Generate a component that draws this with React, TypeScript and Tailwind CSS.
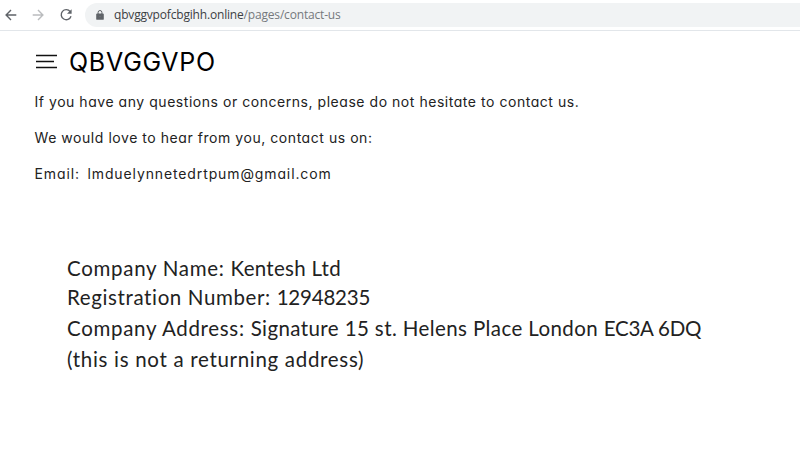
const BackIcon = ({ className }: { className: string }) => (
  <svg viewBox="0 0 12 12" className={className} fill="none" stroke="currentColor" strokeWidth="1.4">
    <path d="M11.3 6H1.2M6 1.1 1.1 6 6 10.9" />
  </svg>
);

const ReloadIcon = () => (
  <svg viewBox="0 0 14 14" className="size-3.5 text-[#5f6368]" fill="none">
    <path d="M11.2 3.6A5 5 0 1 0 12 8.2" stroke="currentColor" strokeWidth="1.4" />
    <path d="M12.6 1.2v4.6H8z" fill="currentColor" />
  </svg>
);

const LockIcon = () => (
  <svg viewBox="0 0 8 10" className="h-2.5 w-2 text-[#5f6368]">
    <rect x="0.2" y="3.5" width="7.6" height="6.3" rx="0.9" fill="currentColor" />
    <path d="M2.1 4V2.4a1.9 1.9 0 0 1 3.8 0V4" fill="none" stroke="currentColor" strokeWidth="1" />
    <circle cx="4" cy="6.6" r="0.7" fill="#777b80" />
  </svg>
);

const BrowserBar = () => (
  <div className="flex h-[31px] items-center border-b border-[#e2e6ea] pl-[5px]">
    <BackIcon className="size-3 text-[#5f6368]" />
    <BackIcon className="ml-[15px] size-3 rotate-180 text-[#babcbe]" />
    <div className="ml-[15px]">
      <ReloadIcon />
    </div>
    <div className="ml-3 flex h-6 flex-1 items-center rounded-l-full bg-[#f1f3f4] pl-[11px]">
      <LockIcon />
      <p className="ml-2.5 whitespace-nowrap font-['Open_Sans',sans-serif] text-xs tracking-[-0.18px] text-[#75797d]">
        <span className="text-[#3c4043]">qbvggvpofcbgihh.online</span>/pages/contact-us
      </p>
    </div>
  </div>
);

const Header = () => (
  <header className="flex h-[61px] items-center pl-9">
    <svg viewBox="0 0 21 15" className="h-[15px] w-[21px]" stroke="#111" strokeWidth="1.4">
      <path d="M0 1.5h21M0 7.5h18M0 13.5h21" />
    </svg>
    <h1 className="ml-3 pt-px text-[25px] leading-none tracking-[0.75px] text-black">QBVGGVPO</h1>
  </header>
);

const App = () => {
  return (
    <div className="h-[475px] overflow-hidden bg-white font-['Inter',sans-serif] [font-feature-settings:'cv11']">
      <BrowserBar />
      <Header />

      {/* contact text */}
      <main className="whitespace-nowrap pl-[34.5px] text-sm text-[#222]">
        <p className="tracking-[0.54px]">If you have any questions or concerns, please do not hesitate to contact us.</p>
        <p className="mt-4 tracking-[0.55px]">We would love to hear from you, contact us on:</p>
        <p className="mt-4 flex tracking-[0.88px]">
          <span className="w-[53px]">Email:</span>
          <span>lmduelynnetedrtpum@gmail.com</span>
        </p>
      </main>

      {/* company details */}
      <section className="mt-[70px] whitespace-pre pl-[67px] font-['Lato',sans-serif] text-[20.5px] leading-[29px] text-[#222]">
        <p className="h-[29px]">
          <span className="tracking-[0.7px]">Company Name: </span>
          <span className="tracking-[0.3px]">Kentesh Ltd</span>
        </p>
        <p className="h-[31px]">
          <span className="tracking-[0.62px]">Registration Number: </span>
          <span className="tracking-[-0.2px]">12948235</span>
        </p>
        <p className="h-[31px]">
          <span className="tracking-[0.68px]">Company Address: </span>
          <span className="tracking-[0.4px]">Signature 15 st. Helens Place London </span>
          <span className="tracking-[-0.25px]">EC3A 6DQ</span>
        </p>
        <p className="h-[31px] tracking-[0.69px]">(this is not a returning address)</p>
      </section>
    </div>
  );
};

export default App;
